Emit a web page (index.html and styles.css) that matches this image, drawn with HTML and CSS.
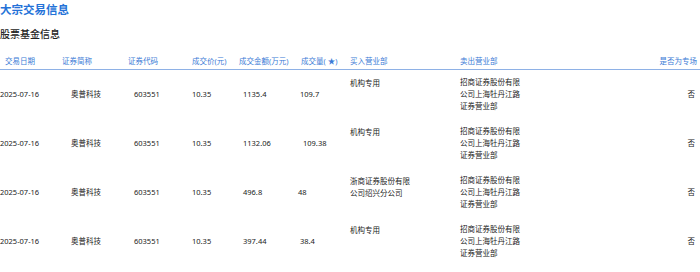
FILE: index.html
```html
<!DOCTYPE html>
<html lang="zh-CN">
<head>
    <meta charset="UTF-8">
    <meta name="viewport" content="width=device-width, initial-scale=1.0">
    <title>大宗交易信息</title>
    <link rel="stylesheet" href="styles.css">
</head>
<body>
    <h1 class="page-title">大宗交易信息</h1>
    <h2 class="sub-title">股票基金信息</h2>

    <table class="trade-table">
        <thead>
            <tr>
                <th>交易日期</th>
                <th>证券简称</th>
                <th>证券代码</th>
                <th>成交价(元)</th>
                <th>成交金额(万元)</th>
                <th>成交量( ★)</th>
                <th>买入营业部</th>
                <th>卖出营业部</th>
                <th>是否为专场</th>
            </tr>
        </thead>
        <tbody>
            <tr>
                <td>2025-07-16</td>
                <td>奥普科技</td>
                <td>603551</td>
                <td>10.35</td>
                <td>1135.4</td>
                <td>109.7</td>
                <td class="buyer">机构专用</td>
                <td class="seller">招商证券股份有限<br>公司上海牡丹江路<br>证券营业部</td>
                <td>否</td>
            </tr>
            <tr>
                <td>2025-07-16</td>
                <td>奥普科技</td>
                <td>603551</td>
                <td>10.35</td>
                <td>1132.06</td>
                <td class="shift">109.38</td>
                <td class="buyer">机构专用</td>
                <td class="seller">招商证券股份有限<br>公司上海牡丹江路<br>证券营业部</td>
                <td>否</td>
            </tr>
            <tr>
                <td>2025-07-16</td>
                <td>奥普科技</td>
                <td>603551</td>
                <td>10.35</td>
                <td>496.8</td>
                <td class="pull">48</td>
                <td class="buyer">浙商证券股份有限<br>公司绍兴分公司</td>
                <td class="seller">招商证券股份有限<br>公司上海牡丹江路<br>证券营业部</td>
                <td>否</td>
            </tr>
            <tr>
                <td>2025-07-16</td>
                <td>奥普科技</td>
                <td>603551</td>
                <td>10.35</td>
                <td>397.44</td>
                <td>38.4</td>
                <td class="buyer">机构专用</td>
                <td class="seller">招商证券股份有限<br>公司上海牡丹江路<br>证券营业部</td>
                <td>否</td>
            </tr>
        </tbody>
    </table>
</body>
</html>
```

FILE: styles.css
```css
body {
    font-family: "Noto Sans", "Noto Sans CJK SC", sans-serif;
    margin: 0;
    padding: 0;
    background-color: #fff;
    color: #222;
}

.page-title {
    font-size: 11.5px;
    line-height: 20px;
    font-weight: bold;
    color: #2472d8;
    margin: 0;
}

.sub-title {
    font-size: 10px;
    line-height: 14px;
    font-weight: 500;
    color: #222;
    margin: 7px 0 0;
}

.trade-table {
    width: 700px;
    table-layout: fixed;
    border-collapse: collapse;
    margin-top: 11px;
    font-size: 7.5px;
}

.trade-table th,
.trade-table td {
    box-sizing: border-box;
}

.trade-table th {
    font-weight: normal;
    color: #3b7bd6;
    line-height: 12px;
    padding: 3px 0 2px;
    text-align: left;
    white-space: nowrap;
    border-bottom: 1px solid #8eb1e6;
}

.trade-table td {
    height: 49px;
    padding: 0;
    line-height: 12px;
    vertical-align: middle;
    text-align: left;
    white-space: nowrap;
}

.trade-table td.buyer {
    vertical-align: top;
    padding-top: 7px;
}

/* column widths + text offsets */
.trade-table th:nth-child(1) { width: 50px; padding-left: 5px; }
.trade-table td:nth-child(1) { padding-left: 0; }

.trade-table th:nth-child(2) { width: 65px; padding-left: 12px; }
.trade-table td:nth-child(2) { padding-left: 21px; }

.trade-table th:nth-child(3) { width: 65px; padding-left: 13px; }
.trade-table td:nth-child(3) { padding-left: 19px; }

.trade-table th:nth-child(4) { width: 56px; padding-left: 12px; }
.trade-table td:nth-child(4) { padding-left: 12px; }

.trade-table th:nth-child(5) { width: 62px; padding-left: 3px; }
.trade-table td:nth-child(5) { padding-left: 7px; }

.trade-table th:nth-child(6) { width: 48px; padding-left: 3px; }
.trade-table td:nth-child(6) { padding-left: 2px; }
.trade-table td.shift { padding-left: 5px; }
.trade-table td.pull { padding-left: 0; }

.trade-table th:nth-child(7) { width: 110px; padding-left: 4px; }
.trade-table td:nth-child(7) { padding-left: 4px; }

.trade-table th:nth-child(8) { width: 184px; padding-left: 4px; }
.trade-table td:nth-child(8) { padding-left: 4px; }

.trade-table th:nth-child(9) { width: 60px; text-align: right; padding-right: 3px; }
.trade-table td:nth-child(9) { text-align: right; padding-right: 5px; }
```
